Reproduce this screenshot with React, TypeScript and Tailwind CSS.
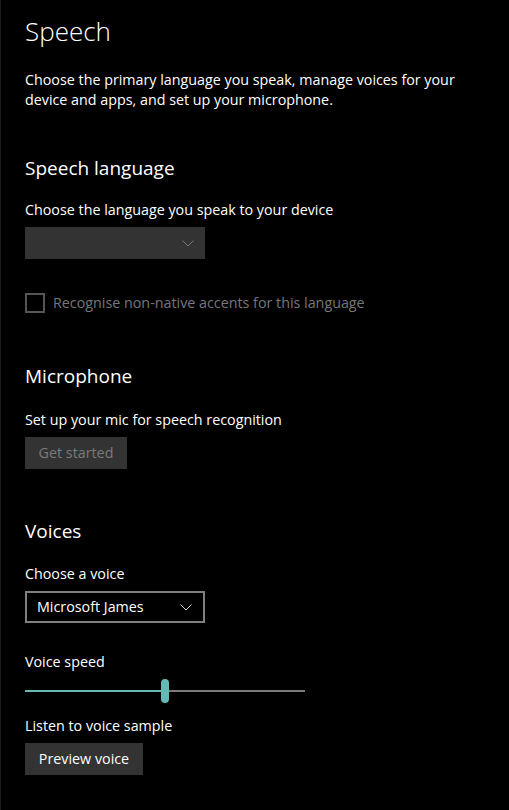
import { useState } from "react";

function Chevron({ color }: { color: string }) {
  return (
    <svg width="12" height="7" viewBox="0 0 12 7" fill="none">
      <path d="M0.5 0.5 L6 6 L11.5 0.5" stroke={color} strokeWidth="1" />
    </svg>
  );
}

function Heading({ children }: { children: string }) {
  return <h2 className="text-[19px] leading-[28px] text-white">{children}</h2>;
}

function Label({ children }: { children: string }) {
  return <p className="text-[14.3px] leading-[20px] text-white">{children}</p>;
}

export default function App() {
  const [speed] = useState(50);

  return (
    <div
      className="h-[810px] w-[509px] overflow-hidden border-l border-[#1e1e1e] bg-black pl-[24px] text-white"
      style={{ fontFamily: '"Open Sans", "Noto Sans", sans-serif' }}
    >
      <h1 className="pt-[13px] text-[26px] font-light leading-[36px]">Speech</h1>

      <p className="mt-[21px] w-[450px] text-[14.3px] leading-[20px]">
        Choose the primary language you speak, manage voices for your device
        and apps, and set up your microphone.
      </p>

      <section className="mt-[44px]">
        <Heading>Speech language</Heading>
        <div className="mt-[18px]">
          <Label>Choose the language you speak to your device</Label>
        </div>
        <div className="mt-[7px] flex h-[32px] w-[180px] items-center justify-end bg-[#333333] pr-[11px]">
          <Chevron color="#7a7a7a" />
        </div>
        <label className="mt-[34px] flex items-center gap-[8px]">
          <span className="h-[20px] w-[20px] border-2 border-[#555555]" />
          <span className="text-[14.3px] leading-[20px] text-[#777777]">
            Recognise non-native accents for this language
          </span>
        </label>
      </section>

      <section className="mt-[49px]">
        <Heading>Microphone</Heading>
        <div className="mt-[20px]">
          <Label>Set up your mic for speech recognition</Label>
        </div>
        <button className="mt-[7px] h-[32px] w-[102px] bg-[#333333] text-[14.3px] text-[#7a7a7a]">
          Get started
        </button>
      </section>

      <section className="mt-[48px]">
        <Heading>Voices</Heading>
        <div className="mt-[19px]">
          <Label>Choose a voice</Label>
        </div>
        <div className="mt-[7px] flex h-[32px] w-[180px] items-center justify-between border-2 border-[#7f7f7f] pl-[10px] pr-[11px]">
          <span className="text-[14.3px] text-white">Microsoft James</span>
          <Chevron color="#d0d0d0" />
        </div>

        <div className="mt-[29px]">
          <Label>Voice speed</Label>
        </div>
        <div className="relative mt-[7px] h-[24px] w-[280px]">
          <div className="absolute left-0 right-0 top-[11px] h-[2px] bg-[#7a7a7a]" />
          <div
            className="absolute left-0 top-[11px] h-[2px] bg-[#66bab5]"
            style={{ width: `${(speed / 100) * 280 - 4}px` }}
          />
          <div
            className="absolute top-0 h-[24px] w-[8px] rounded-full bg-[#66bab5]"
            style={{ left: `${(speed / 100) * 280 - 4}px` }}
          />
        </div>

        <div className="mt-[13px]">
          <Label>Listen to voice sample</Label>
        </div>
        <button className="mt-[7px] h-[32px] w-[118px] bg-[#333333] text-[14.3px] text-white">
          Preview voice
        </button>
      </section>
    </div>
  );
}
